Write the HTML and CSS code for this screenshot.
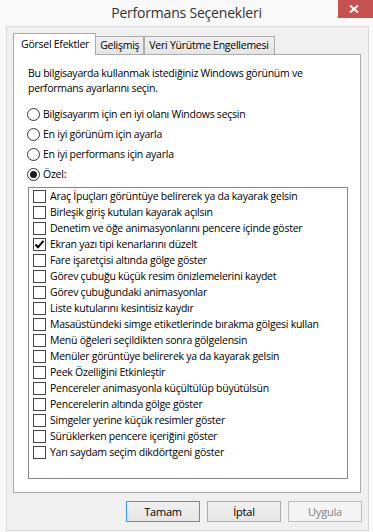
FILE: index.html
```html
<!DOCTYPE html>
<html lang="tr">
<head>
    <meta charset="UTF-8">
    <meta name="viewport" content="width=device-width, initial-scale=1.0">
    <title>Performans Seçenekleri</title>
    <link rel="stylesheet" href="styles.css">
</head>
<body>
<div class="window">
    <div class="titlebar">
        <span></span>
        <div class="title">Performans Seçenekleri</div>
        <button class="close" title="Kapat">
            <svg width="10" height="8" viewBox="0 0 10 8"><path d="M1 0.5 L9 7.5 M9 0.5 L1 7.5" stroke="#fff" stroke-width="2" fill="none"/></svg>
        </button>
    </div>

    <div class="client">
        <div class="tabs">
            <div class="tab active">Görsel Efektler</div>
            <div class="tab">Gelişmiş</div>
            <div class="tab">Veri Yürütme Engellemesi</div>
        </div>

        <div class="panel">
            <p class="intro">Bu bilgisayarda kullanmak istediğiniz Windows görünüm ve<br>performans ayarlarını seçin.</p>

            <div class="radios">
                <div class="radio"><span class="circle"></span>Bilgisayarım için en iyi olanı Windows seçsin</div>
                <div class="radio"><span class="circle"></span>En iyi görünüm için ayarla</div>
                <div class="radio"><span class="circle"></span>En iyi performans için ayarla</div>
                <div class="radio"><span class="circle on"></span>Özel:</div>
            </div>

            <div class="listbox">
                <div class="item"><span class="box"></span>Araç İpuçları görüntüye belirerek ya da kayarak gelsin</div>
                <div class="item"><span class="box"></span>Birleşik giriş kutuları kayarak açılsın</div>
                <div class="item"><span class="box"></span>Denetim ve öğe animasyonlarını pencere içinde göster</div>
                <div class="item"><span class="box"><svg width="11" height="11" viewBox="0 0 11 11"><path d="M1.5 5.5 L4 8.2 L9.5 1.8" stroke="#000" stroke-width="1.9" fill="none"/></svg></span>Ekran yazı tipi kenarlarını düzelt</div>
                <div class="item"><span class="box"></span>Fare işaretçisi altında gölge göster</div>
                <div class="item"><span class="box"></span>Görev çubuğu küçük resim önizlemelerini kaydet</div>
                <div class="item"><span class="box"></span>Görev çubuğundaki animasyonlar</div>
                <div class="item"><span class="box"></span>Liste kutularını kesintisiz kaydır</div>
                <div class="item"><span class="box"></span>Masaüstündeki simge etiketlerinde bırakma gölgesi kullan</div>
                <div class="item"><span class="box"></span>Menü öğeleri seçildikten sonra gölgelensin</div>
                <div class="item"><span class="box"></span>Menüler görüntüye belirerek ya da kayarak gelsin</div>
                <div class="item"><span class="box"></span>Peek Özelliğini Etkinleştir</div>
                <div class="item"><span class="box"></span>Pencereler animasyonla küçültülüp büyütülsün</div>
                <div class="item"><span class="box"></span>Pencerelerin altında gölge göster</div>
                <div class="item"><span class="box"></span>Simgeler yerine küçük resimler göster</div>
                <div class="item"><span class="box"></span>Sürüklerken pencere içeriğini göster</div>
                <div class="item"><span class="box"></span>Yarı saydam seçim dikdörtgeni göster</div>
            </div>
        </div>

        <div class="buttons">
            <button class="btn default">Tamam</button>
            <button class="btn">İptal</button>
            <button class="btn" disabled>Uygula</button>
        </div>
    </div>
</div>
</body>
</html>
```

FILE: styles.css
```css
* {
    box-sizing: border-box;
}
html, body {
    margin: 0;
}
body {
    font-family: "Open Sans", "Noto Sans", sans-serif;
    font-size: 10.5px;
    letter-spacing: -0.25px;
    color: #000;
    background-color: #f9f9f9;
}
.window {
    width: 373px;
    height: 532px;
    background-color: #f9f9f9;
}

/* baslik cubugu */
.titlebar {
    display: grid;
    grid-template-columns: 1fr auto 1fr;
    height: 26px;
}
.title {
    font-size: 14px;
    letter-spacing: -0.2px;
    line-height: 25px;
    color: #333;
    white-space: nowrap;
}
.close {
    justify-self: end;
    width: 35px;
    height: 18px;
    border: none;
    padding: 0 4px 0 0;
    background-color: #c75050;
    display: flex;
    align-items: center;
    justify-content: center;
}

/* pencere ici */
.client {
    margin-left: 6px;
    width: 363px;
    height: 505px;
    border: 1px solid #dadada;
    background-color: #f0f0f0;
    padding: 6px 6px 0 6px;
}
.tabs {
    display: flex;
    align-items: flex-end;
    height: 22px;
    margin-bottom: -1px;
}
.tab {
    height: 18px;
    margin-bottom: 1px;
    padding: 0 4px;
    line-height: 17px;
    border: 1px solid #acacac;
    border-bottom: none;
    background: linear-gradient(#f0f0f0, #e5e5e5);
    white-space: nowrap;
}
.tab.active {
    position: relative;
    z-index: 1;
    height: 22px;
    margin-bottom: 0;
    padding: 0 6px 0 7px;
    line-height: 20px;
    background: #fff;
}
.tab.active + .tab {
    border-left: none;
}
.tab:last-child {
    padding-right: 5px;
}
.panel {
    width: 348px;
    height: 439px;
    border: 1px solid #acacac;
    background-color: #fff;
    padding: 11px 0 0 13px;
}
.intro {
    margin: 0 0 8px 1px;
    line-height: 15px;
}
.radio {
    display: flex;
    align-items: center;
    height: 20px;
}
.circle {
    width: 13px;
    height: 13px;
    border: 1px solid #333;
    border-radius: 50%;
    margin-right: 3px;
    display: flex;
    align-items: center;
    justify-content: center;
}
.circle.on::after {
    content: "";
    width: 7px;
    height: 7px;
    border-radius: 50%;
    background-color: #1a1a1a;
}
.listbox {
    margin: 3px 0 0 1px;
    width: 320px;
    height: 292px;
    border: 1px solid #828790;
}
.item {
    display: flex;
    align-items: center;
    height: 16px;
    padding-left: 4px;
    white-space: nowrap;
}
.box {
    width: 13px;
    height: 13px;
    border: 1px solid #444;
    margin-right: 4px;
    display: flex;
    align-items: center;
    justify-content: center;
}

/* dugmeler */
.buttons {
    display: flex;
    justify-content: flex-end;
    gap: 7px;
    margin-top: 8px;
}
.btn {
    width: 74px;
    height: 21px;
    border: 1px solid #acacac;
    background: linear-gradient(#f0f0f0, #e5e5e5);
    font-family: inherit;
    font-size: 11px;
    letter-spacing: -0.2px;
    color: #000;
    padding: 0;
}
.btn.default {
    border-color: #3399ff;
}
.btn:disabled {
    border-color: #bfbfbf;
    background: #f4f4f4;
    color: #838383;
}
```
